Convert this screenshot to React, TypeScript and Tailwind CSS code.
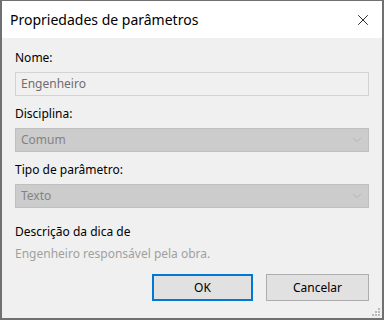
import { X, ChevronDown } from "lucide-react";

const font = { fontFamily: '"Segoe UI", "Noto Sans", "Open Sans", sans-serif' };

function Combo({ value }: { value: string }) {
  return (
    <div className="flex items-center justify-between h-[24px] bg-[#cccccc] border border-[#bfbfbf] pl-[5px] pr-[4px]">
      <span className="text-[12px] text-[#838383]">{value}</span>
      <ChevronDown className="w-[14px] h-[14px] text-[#a8a8a8]" strokeWidth={1.2} />
    </div>
  );
}

export default function App() {
  return (
    <div
      className="w-[384px] h-[320px] flex flex-col bg-[#f0f0f0] border-t border-l-2 border-r-2 border-b-2 border-[#707070] overflow-hidden"
      style={font}
    >
      {/* Title bar */}
      <div className="h-[37px] bg-white flex items-center justify-between pl-[8px] pr-[10px] shrink-0">
        <span className="text-[14px] text-black">Propriedades de parâmetros</span>
        <X className="w-[18px] h-[18px] text-black" strokeWidth={1.1} />
      </div>

      {/* Body */}
      <div className="flex flex-col px-[13px] pt-[12px] text-[12px] text-black">
        <span className="leading-[16px]">Nome:</span>
        <div className="mt-[6px] h-[24px] border border-[#d3d3d3] flex items-center pl-[5px]">
          <span className="text-[#6d6d6d]">Engenheiro</span>
        </div>

        <span className="leading-[16px] mt-[10px]">Disciplina:</span>
        <div className="mt-[6px]">
          <Combo value="Comum" />
        </div>

        <span className="leading-[16px] mt-[10px]">Tipo de parâmetro:</span>
        <div className="mt-[6px]">
          <Combo value="Texto" />
        </div>

        <span className="leading-[16px] mt-[16px]">Descrição da dica de</span>
        <span className="leading-[16px] mt-[6px] text-[#a0a0a0]">Engenheiro responsável pela obra.</span>

        <div className="flex justify-end gap-[13px] mt-[12px]">
          <button className="w-[101px] h-[27px] bg-[#e1e1e1] border-2 border-[#0078d7] text-[12px] text-black">
            OK
          </button>
          <button className="w-[103px] h-[27px] bg-[#e1e1e1] border border-[#adadad] text-[12px] text-black">
            Cancelar
          </button>
        </div>
      </div>

      {/* Resize grip */}
      <div className="relative flex-1">
        <svg className="absolute right-[1px] bottom-[1px]" width="10" height="10" viewBox="0 0 10 10">
          <rect x="7" y="1" width="2" height="2" fill="#b9b9b9" />
          <rect x="4" y="4" width="2" height="2" fill="#b9b9b9" />
          <rect x="7" y="4" width="2" height="2" fill="#b9b9b9" />
          <rect x="1" y="7" width="2" height="2" fill="#b9b9b9" />
          <rect x="4" y="7" width="2" height="2" fill="#b9b9b9" />
          <rect x="7" y="7" width="2" height="2" fill="#b9b9b9" />
        </svg>
      </div>
    </div>
  );
}
